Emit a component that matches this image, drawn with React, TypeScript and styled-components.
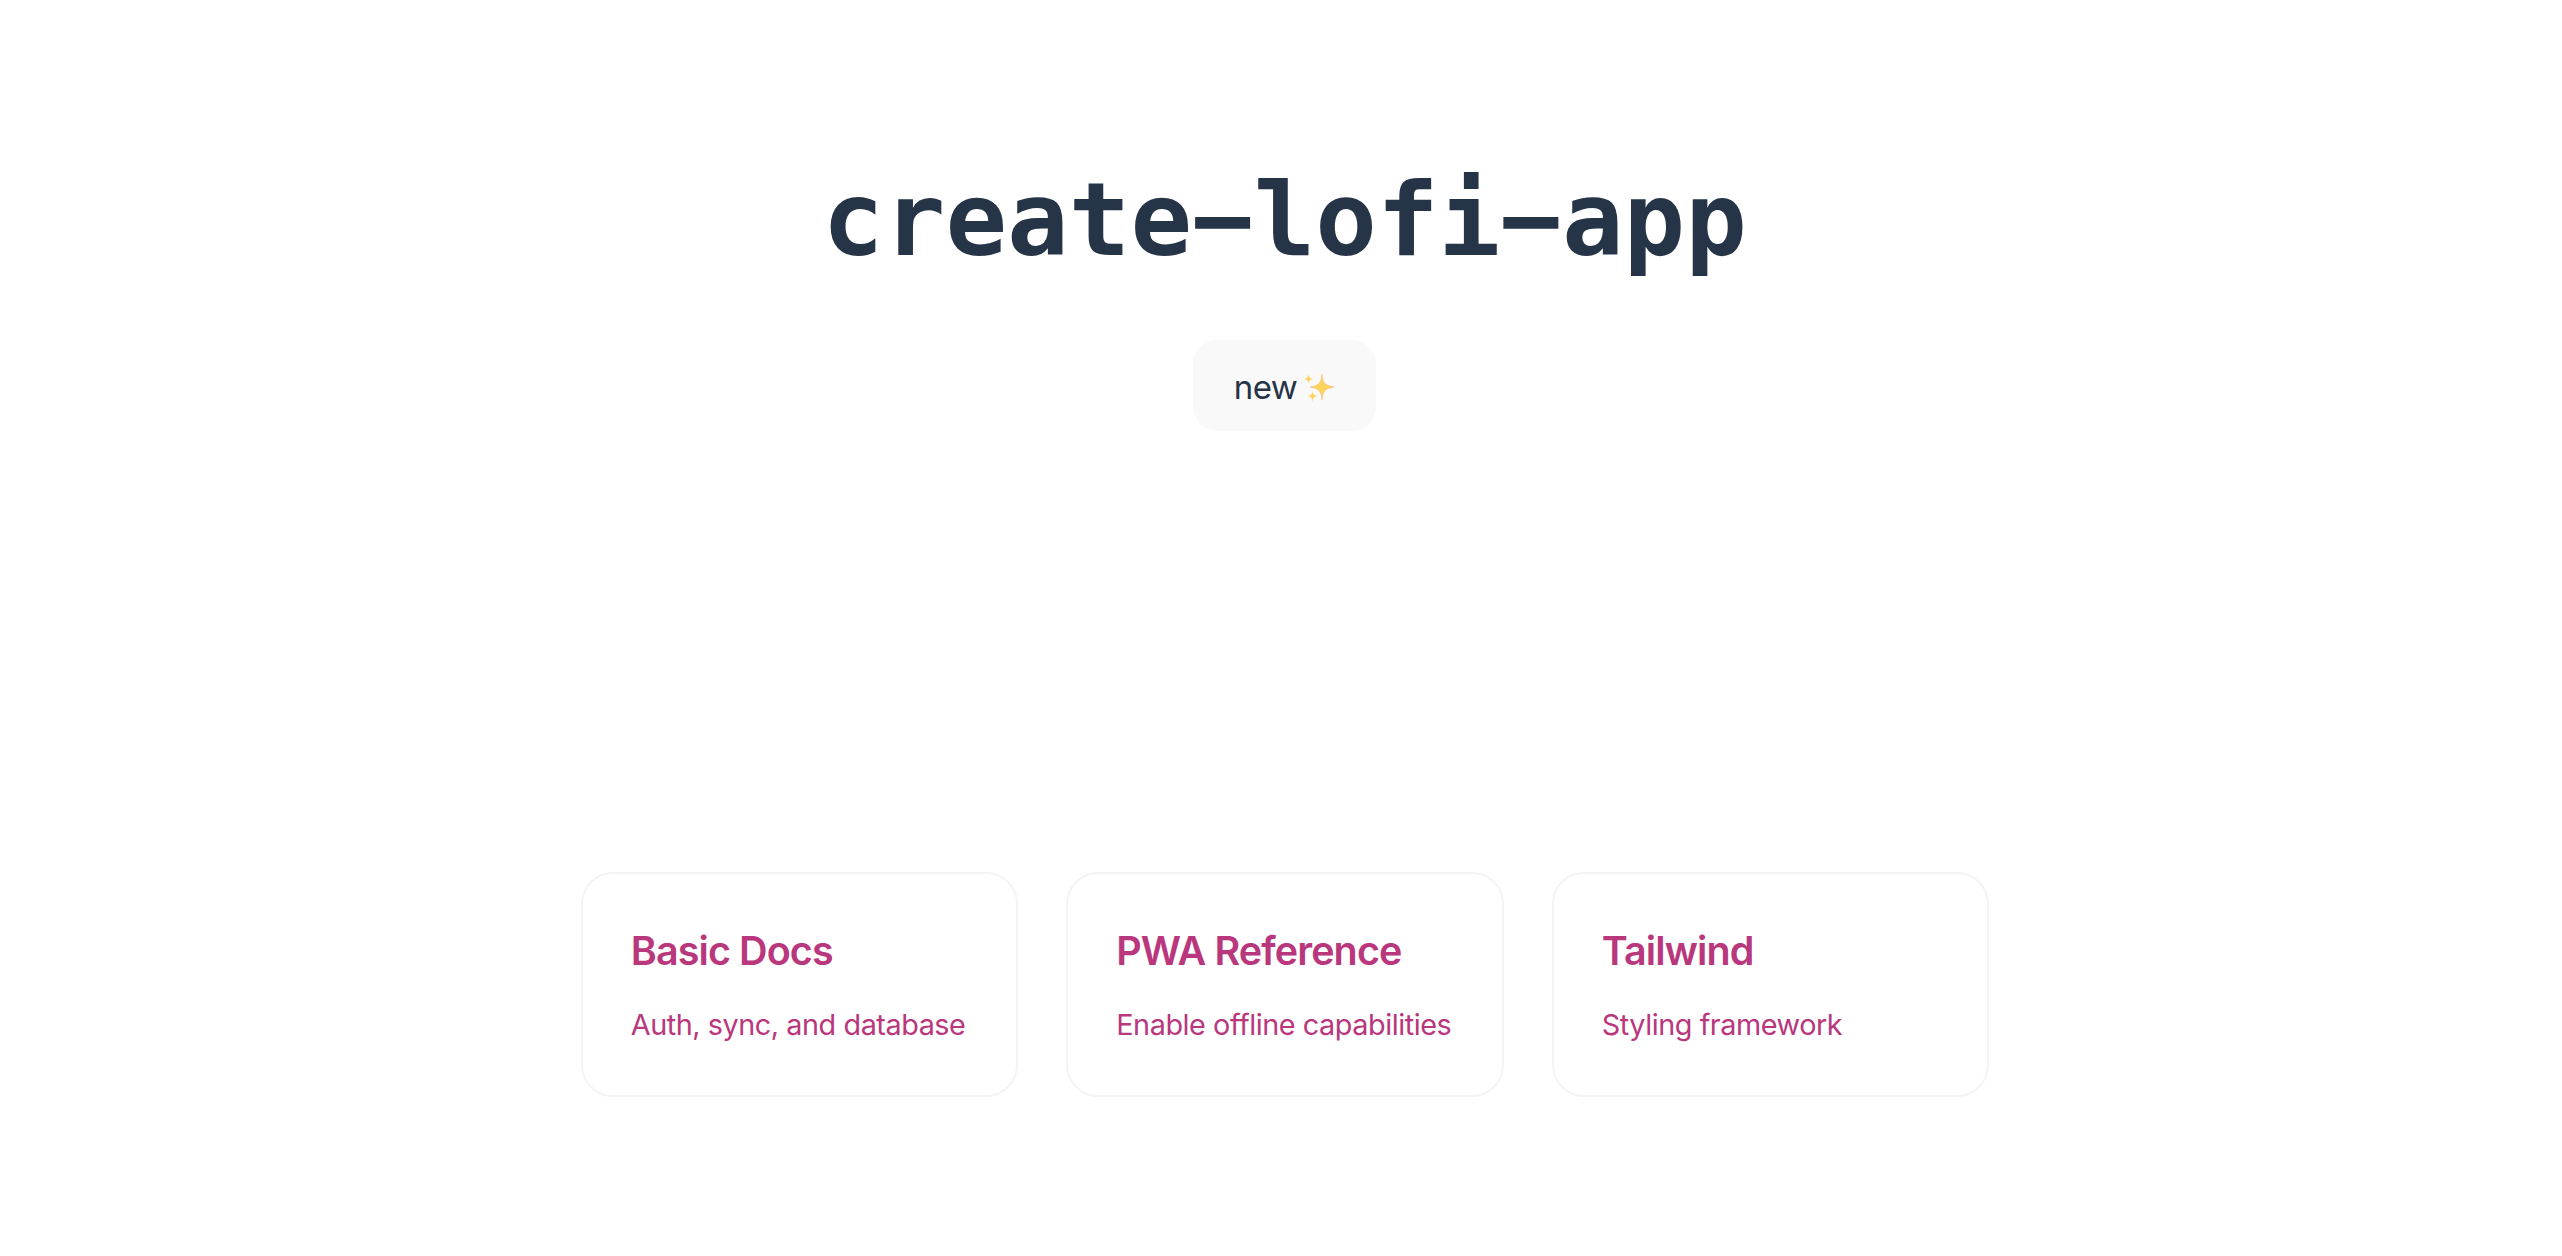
import React from "react";
import styled, { createGlobalStyle } from "styled-components";

const GlobalStyle = createGlobalStyle`
  html, body {
    margin: 0;
    padding: 0;
    background: #fff;
  }
  body {
    font-family: Inter, "Liberation Sans", sans-serif;
  }
`;

const Page = styled.main`
  width: 100%;
  height: 1256px;
  box-sizing: border-box;
  padding: 159px 0 0 7px;
  display: flex;
  flex-direction: column;
  align-items: center;
  overflow: hidden;
`;

const Title = styled.h1`
  margin: 0;
  height: 122px;
  font-family: "DejaVu Sans Mono", monospace;
  font-size: 102.4px;
  line-height: 122px;
  font-weight: 700;
  color: #253447;
`;

const NewButton = styled.button`
  margin-top: 59px;
  width: 183px;
  height: 91px;
  padding: 2px 0 0;
  border: 0;
  border-radius: 24px;
  background: #f9f9f9;
  color: #253447;
  font-family: inherit;
  font-size: 33px;
  letter-spacing: -0.5px;
  display: flex;
  align-items: center;
  justify-content: center;
  gap: 6px;
`;

const Cards = styled.section`
  margin: 441px 0 0 1px;
  display: grid;
  grid-template-columns: repeat(3, 437.5px);
  gap: 48px;
`;

const Card = styled.a`
  box-sizing: border-box;
  height: 225px;
  padding: 53px 48px 0;
  border: 2px solid #f4f4f4;
  border-radius: 32px;
  color: #b9377c;
  text-decoration: none;
`;

const CardTitle = styled.h2`
  margin: 0;
  font-size: 39.5px;
  line-height: 48px;
  font-weight: 600;
  letter-spacing: -0.9px;
`;

const CardText = styled.p`
  margin: 33px 0 0;
  font-size: 28.8px;
  line-height: 34px;
  font-weight: 400;
  letter-spacing: -0.45px;
  white-space: nowrap;
`;

const Sparkles = () => (
  <svg width="32" height="32" viewBox="0 0 32 32" aria-hidden="true">
    <path
      d="M19 3 C19.8 11.5 21.5 14.5 31 16 C21.5 17.5 19.8 20.5 19 29 C18.2 20.5 16.5 17.5 7 16 C16.5 14.5 18.2 11.5 19 3 Z"
      fill="#fcd45c"
      stroke="#f6b26b"
      strokeWidth="0.5"
    />
    <path d="M5.5 3 C5.9 6 6.8 7.4 10 8 C6.8 8.6 5.9 10 5.5 13 C5.1 10 4.2 8.6 1 8 C4.2 7.4 5.1 6 5.5 3 Z" fill="#fcd45c" />
    <path d="M9.5 20 C9.9 23 10.8 24.4 14.5 25 C10.8 25.6 9.9 27 9.5 31 C9.1 27 8.2 25.6 4.5 25 C8.2 24.4 9.1 23 9.5 20 Z" fill="#fcd45c" />
  </svg>
);

const links = [
  { title: "Basic Docs", text: "Auth, sync, and database" },
  { title: "PWA Reference", text: "Enable offline capabilities" },
  { title: "Tailwind", text: "Styling framework" },
];

const App = () => (
  <>
    <GlobalStyle />
    <Page>
      <Title>create−lofi−app</Title>
      <NewButton>
        new <Sparkles />
      </NewButton>
      <Cards>
        {links.map((link) => (
          <Card key={link.title}>
            <CardTitle>{link.title}</CardTitle>
            <CardText>{link.text}</CardText>
          </Card>
        ))}
      </Cards>
    </Page>
  </>
);

export default App;
